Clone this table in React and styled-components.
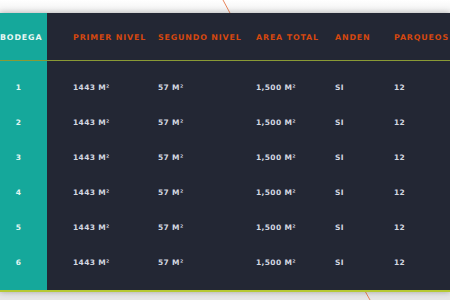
import React from 'react';
import styled, { createGlobalStyle } from 'styled-components';

const GlobalStyle = createGlobalStyle`
  html, body {
    margin: 0;
    padding: 0;
    background: #fff;
    width: 450px;
    height: 300px;
    overflow: hidden;
  }
`;

const Page = styled.div`
  position: relative;
  width: 450px;
  height: 300px;
  padding-top: 13px;
  box-sizing: border-box;
  background: linear-gradient(to bottom, #ffffff 0px, #f4f4f4 10px, #e6e6e6 100%);
  font-family: 'DejaVu Sans', 'Liberation Sans', sans-serif;
`;

const Deco = styled.svg`
  position: absolute;
  left: 0;
  top: 0;
  width: 450px;
  height: 300px;
`;

const Table = styled.div`
  position: relative;
  height: 279px;
  box-sizing: border-box;
  background: linear-gradient(to right, #15a89b 47px, #232734 47px);
  border-bottom: 2px solid #b6c933;
  box-shadow: 0 0 6px rgba(0, 0, 0, 0.3);
`;

const Row = styled.div`
  display: grid;
  grid-template-columns: 47px 111px 98px 79px 59px 1fr;
  align-items: center;
  height: ${(p) => (p.$head ? '48px' : '35px')};
  padding-top: ${(p) => (p.$head ? '2px' : '0')};
  box-sizing: border-box;
  border-bottom: ${(p) => (p.$head ? '1px solid #8a9a35' : 'none')};
  margin-bottom: ${(p) => (p.$head ? '9px' : '0')};
`;

const Cell = styled.div`
  white-space: nowrap;
  font-weight: bold;
  font-size: ${(p) => (p.$head ? '7.9px' : '7.5px')};
  letter-spacing: ${(p) => (p.$head ? '0.85px' : '0.35px')};
  color: ${(p) => (p.$head ? (p.$side ? '#e9f7f4' : '#d6470f') : p.$side ? '#e3f5f2' : '#d3d7e0')};
  text-align: ${(p) => (p.$side ? 'center' : 'left')};
  padding-right: ${(p) => (p.$side ? '10px' : '0')};
  padding-left: ${(p) => (p.$first ? '26px' : '0')};
`;

const headers = ['PRIMER NIVEL', 'SEGUNDO NIVEL', 'AREA TOTAL', 'ANDEN', 'PARQUEOS'];

const rows = [1, 2, 3, 4, 5, 6].map((n) => [String(n), '1443 M²', '57 M²', '1,500 M²', 'SI', '12']);

export default function App() {
  return (
    <Page>
      <GlobalStyle />
      <Deco viewBox="0 0 450 300">
        <line x1="223" y1="0" x2="230.5" y2="14" stroke="#e8845a" strokeWidth="1" />
        <line x1="365" y1="291" x2="370" y2="300" stroke="#e8845a" strokeWidth="1" />
      </Deco>
      <Table>
        <Row $head>
          <Cell $head $side>BODEGA</Cell>
          {headers.map((h, i) => (
            <Cell key={h} $head $first={i === 0}>{h}</Cell>
          ))}
        </Row>
        {rows.map((r) => (
          <Row key={r[0]}>
            {r.map((v, i) => (
              <Cell key={i} $side={i === 0} $first={i === 1}>{v}</Cell>
            ))}
          </Row>
        ))}
      </Table>
    </Page>
  );
}
